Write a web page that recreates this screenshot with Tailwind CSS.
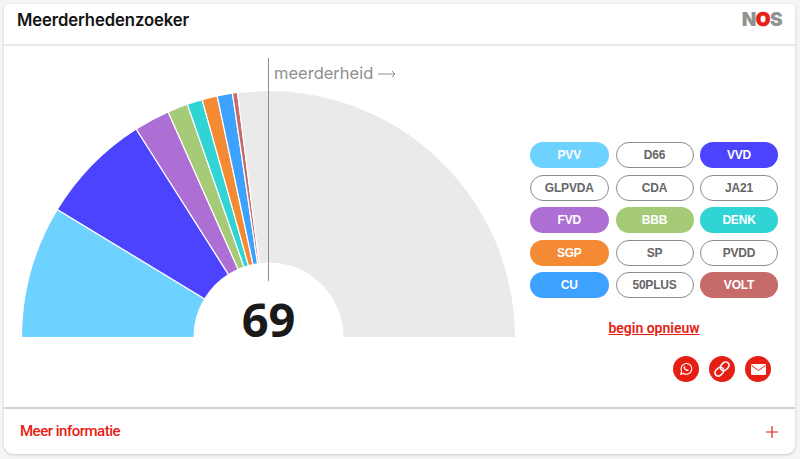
<!DOCTYPE html>
<html lang="nl">
<head>
    <meta charset="UTF-8">
    <title>Meerderhedenzoeker</title>
    <script src="https://cdn.jsdelivr.net/npm/@tailwindcss/browser@4"></script>
</head>
<body class="w-[800px] h-[459px] overflow-hidden bg-[#f5f5f5] font-['Liberation_Sans',sans-serif]">
    <div class="mx-[4px] mt-[4px] w-[791px] h-[450px] bg-white rounded-t-[4px] rounded-b-[9px] shadow-[0_1px_3px_rgba(0,0,0,0.18)] flex flex-col">
        <header class="h-[42px] shrink-0 border-b-2 border-[#e8e8e8] flex justify-between items-start pl-[13px] pr-[13px]">
            <h1 class="mt-[6px] text-[16.7px] leading-[20px] font-semibold text-[#141414] font-['Inter',sans-serif] tracking-[-0.1px]">Meerderhedenzoeker</h1>
            <div class="mt-[6px] text-[19px] leading-[20px] font-black text-[#929292] font-['Inter',sans-serif] tracking-[-0.6px]">N<span class="text-[#e61e14] [-webkit-text-stroke:0.6px_#e61e14]">O</span>S</div>
        </header>

        <main class="flex-1 flex min-h-0">
            <div class="w-[520px] shrink-0">
                <svg id="chart" width="520" height="362" viewBox="0 0 520 362">
                    <g id="wedges"></g>
                    <line x1="264.5" y1="12" x2="264.5" y2="235" stroke="#8c8c8c" stroke-width="1"/>
                    <text x="270" y="33" font-family="Inter, sans-serif" font-size="16.5" fill="#8f8f8f">meerderheid</text>
                    <path d="M374 28 H391 M388 25 L391 28 L388 31" fill="none" stroke="#8f8f8f" stroke-width="1"/>
                    <text x="264.5" y="291" text-anchor="middle" font-family="Open Sans, sans-serif" font-size="47" font-weight="700" fill="#1a1a1a">69</text>
                </svg>
            </div>

            <div class="flex-1 pt-[96px] pl-[5.5px]">
                <div class="grid grid-cols-[79.5px_78px_78px] gap-x-[6.5px] gap-y-[6.5px] text-[12px] tracking-[-0.2px] font-bold">
                    <button class="h-[26px] rounded-full bg-[#6dd2ff] text-white">PVV</button>
                    <button class="h-[26px] rounded-full border border-[#8c8c8c] text-[#666]">D66</button>
                    <button class="h-[26px] rounded-full bg-[#4c43ff] text-white">VVD</button>
                    <button class="h-[26px] rounded-full border border-[#8c8c8c] text-[#666]">GLPVDA</button>
                    <button class="h-[26px] rounded-full border border-[#8c8c8c] text-[#666]">CDA</button>
                    <button class="h-[26px] rounded-full border border-[#8c8c8c] text-[#666]">JA21</button>
                    <button class="h-[26px] rounded-full bg-[#ae6fd4] text-white">FVD</button>
                    <button class="h-[26px] rounded-full bg-[#a5ca78] text-white">BBB</button>
                    <button class="h-[26px] rounded-full bg-[#31d4d4] text-white">DENK</button>
                    <button class="h-[26px] rounded-full bg-[#f58a35] text-white">SGP</button>
                    <button class="h-[26px] rounded-full border border-[#8c8c8c] text-[#666]">SP</button>
                    <button class="h-[26px] rounded-full border border-[#8c8c8c] text-[#666]">PVDD</button>
                    <button class="h-[26px] rounded-full bg-[#3da1ff] text-white">CU</button>
                    <button class="h-[26px] rounded-full border border-[#8c8c8c] text-[#666]">50PLUS</button>
                    <button class="h-[26px] rounded-full bg-[#c66a6a] text-white">VOLT</button>
                </div>
                <div class="mt-[21px] w-[249px] text-center leading-[18px]">
                    <a href="#" class="block text-[14px] leading-[18px] font-semibold text-[#e61e14] underline font-['Roboto',sans-serif]">begin opnieuw</a>
                </div>
                <div class="mt-[19px] ml-[143.5px] flex gap-[10px]">
                    <a href="#" class="w-[26px] h-[26px] rounded-full bg-[#e61e14] flex items-center justify-center">
                        <svg width="14" height="14" viewBox="0 0 24 24" fill="none" stroke="white" stroke-width="2"><path d="M3 21l1.500-5.200A9.200 9.200 0 1 1 8 19.600L3 21z"/><path d="M8.500 8c.8-1 1.700-.9 2.100 0l.4 1.200-.8 1.100c.7 1.400 1.800 2.400 3.300 3.100l1.100-.9 1.300.5c.8.5.8 1.300 0 2-1 .8-2.500.6-4.300-.5-1.700-1-3.100-2.600-3.700-4.300-.3-.9-.2-1.700.6-2.200z" fill="white" stroke="none"/></svg>
                    </a>
                    <a href="#" class="w-[26px] h-[26px] rounded-full bg-[#e61e14] flex items-center justify-center">
                        <svg width="18" height="18" viewBox="0 0 24 24" fill="none" stroke="white" stroke-width="2"><g transform="rotate(-45 12 12)"><rect x="0.500" y="7.500" width="13" height="9" rx="4.500"/><rect x="10.500" y="7.500" width="13" height="9" rx="4.500"/></g></svg>
                    </a>
                    <a href="#" class="w-[26px] h-[26px] rounded-full bg-[#e61e14] flex items-center justify-center">
                        <svg width="15" height="11" viewBox="0 0 15 11"><rect width="15" height="11" rx="1" fill="white"/><path d="M0.500 1.500L7.500 6.500L14.500 1.500" fill="none" stroke="#e61e14" stroke-width="1"/></svg>
                    </a>
                </div>
            </div>
        </main>

        <footer class="h-[47px] shrink-0 border-t-2 border-[#d2d2d2] flex items-center justify-between pl-[16px] pr-[17px]">
            <span class="text-[15px] font-medium text-[#e61e14] font-['Roboto',sans-serif] tracking-[-0.5px]">Meer informatie</span>
            <svg width="12" height="12" viewBox="0 0 12 12"><path d="M6 0V12M0 6H12" stroke="#e61e14" stroke-width="1.200"/></svg>
        </footer>
    </div>

    <script>
        // seats per party, out of 150, drawn over a half circle
        const parties = [
            [26, "#6dd2ff"], [22, "#4c43ff"], [7, "#ae6fd4"], [4, "#a5ca78"],
            [3, "#31d4d4"], [3, "#f58a35"], [3, "#3da1ff"], [1, "#c66a6a"], [81, "#eaeaea"]
        ];
        const cx = 264.5, cy = 291.5, R = 247, r = 74.5;
        const pt = (rad, seat) => {
            const a = Math.PI * seat / 150;
            return (cx - rad * Math.cos(a)).toFixed(2) + " " + (cy - rad * Math.sin(a)).toFixed(2);
        };
        let seat = 0, out = "";
        parties.forEach(([n, color]) => {
            const end = seat + n;
            out += `<path d="M${pt(r, seat)} L${pt(R, seat)} A${R} ${R} 0 0 1 ${pt(R, end)} L${pt(r, end)} A${r} ${r} 0 0 0 ${pt(r, seat)} Z" fill="${color}" stroke="white" stroke-width="1.200"/>`;
            seat = end;
        });
        document.querySelector("#wedges").innerHTML = out;
    </script>
</body>
</html>
